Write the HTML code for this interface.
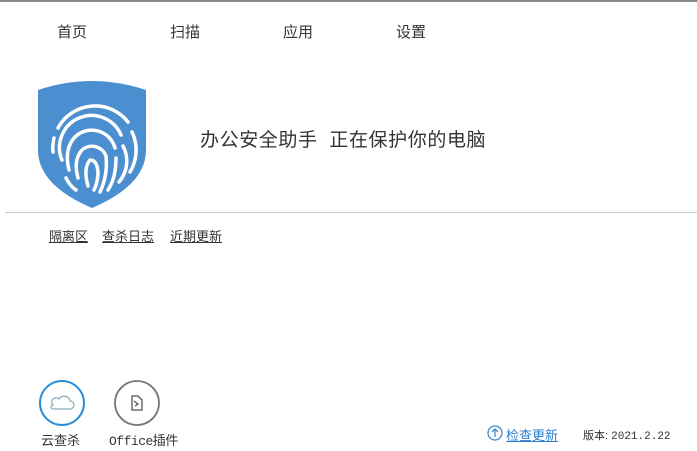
<!DOCTYPE html>
<html><head><meta charset="utf-8"><style>
body{margin:0;width:697px;height:451px;background:#fff;position:relative;overflow:hidden;font-family:"Liberation Sans","Noto Sans CJK SC",sans-serif;color:#333}
.a{position:absolute;white-space:nowrap}
.nav{top:21px;font-size:15px;color:#333}
.u{text-decoration:underline;font-size:13px;color:#333}
</style></head><body>
<div class="a" style="left:0;top:0;width:697px;height:2px;background:#888"></div>
<div class="a nav" style="left:57px">首页</div>
<div class="a nav" style="left:170px">扫描</div>
<div class="a nav" style="left:283px">应用</div>
<div class="a nav" style="left:396px">设置</div>
<svg class="a" style="left:0;top:0" width="697" height="451">
<path d="M38 90 Q92 72 146 90 L146 150 Q146 185 92 208 Q38 185 38 150 Z" fill="#4b8fd1"/>
<g fill="none" stroke="#fff" stroke-width="3.5" stroke-linecap="round">
<path d="M58 128 A42 42 0 0 1 128 122"/>
<path d="M53 152 A42 42 0 0 1 54 138"/>
<path d="M132 132 A42 42 0 0 1 130 172"/>
<path d="M62 160 A32 32 0 0 1 121 135"/>
<path d="M123 146 A32 32 0 0 1 119 182"/>
<path d="M69 170 Q64 150 74 138 A24 24 0 0 1 115 148"/>
<path d="M116 158 Q116 178 108 190"/>
<path d="M78 178 Q73 160 82 150 A15 15 0 0 1 106 156 Q108 175 100 192"/>
<path d="M88 186 Q83 168 90 160 Q97 160 98 172 Q98 182 94 190"/>
<path d="M66 178 Q70 186 76 190"/>
</g>
<line x1="5" y1="212.5" x2="697" y2="212.5" stroke="#ccc" stroke-width="1"/>
<circle cx="62" cy="403" r="22" fill="none" stroke="#2a8fd8" stroke-width="2"/>
<path d="M53 409 h17 a4 4 0 0 0 0-8 a6 6 0 0 0-11-2 a4 4 0 0 0-6 6 a2 2 0 0 0 0 4z" fill="none" stroke="#8ab" stroke-width="1.2"/>
<circle cx="137" cy="403" r="22" fill="none" stroke="#777" stroke-width="1.8"/>
<path d="M132 396 h6 l4 4 v10 h-10 z M134 401 l4 3 l-3 2" fill="none" stroke="#555" stroke-width="1.3"/>
<circle cx="495" cy="433" r="7" fill="none" stroke="#3a8ad0" stroke-width="1.3"/>
<path d="M495 437 v-7 M492 432 l3-3 l3 3" fill="none" stroke="#3a8ad0" stroke-width="1.3"/>
</svg>
<div class="a" style="left:200px;top:125px;font-size:19px;letter-spacing:0.6px;color:#333">办公安全助手&nbsp;&nbsp;正在保护你的电脑</div>
<div class="a u" style="left:49px;top:226px">隔离区</div>
<div class="a u" style="left:102px;top:226px">查杀日志</div>
<div class="a u" style="left:170px;top:226px">近期更新</div>
<div class="a" style="left:41px;top:430px;font-size:13px">云查杀</div>
<div class="a" style="left:109px;top:430px;font-size:13px;font-family:'Liberation Mono','Noto Sans CJK SC',monospace;letter-spacing:-0.5px">Office插件</div>
<div class="a u" style="left:506px;top:425px;color:#2a7fd0">检查更新</div>
<div class="a" style="left:583px;top:427px;font-size:11px">版本: <span style="font-family:'Liberation Mono',monospace">2021.2.22</span></div>
</body></html>
